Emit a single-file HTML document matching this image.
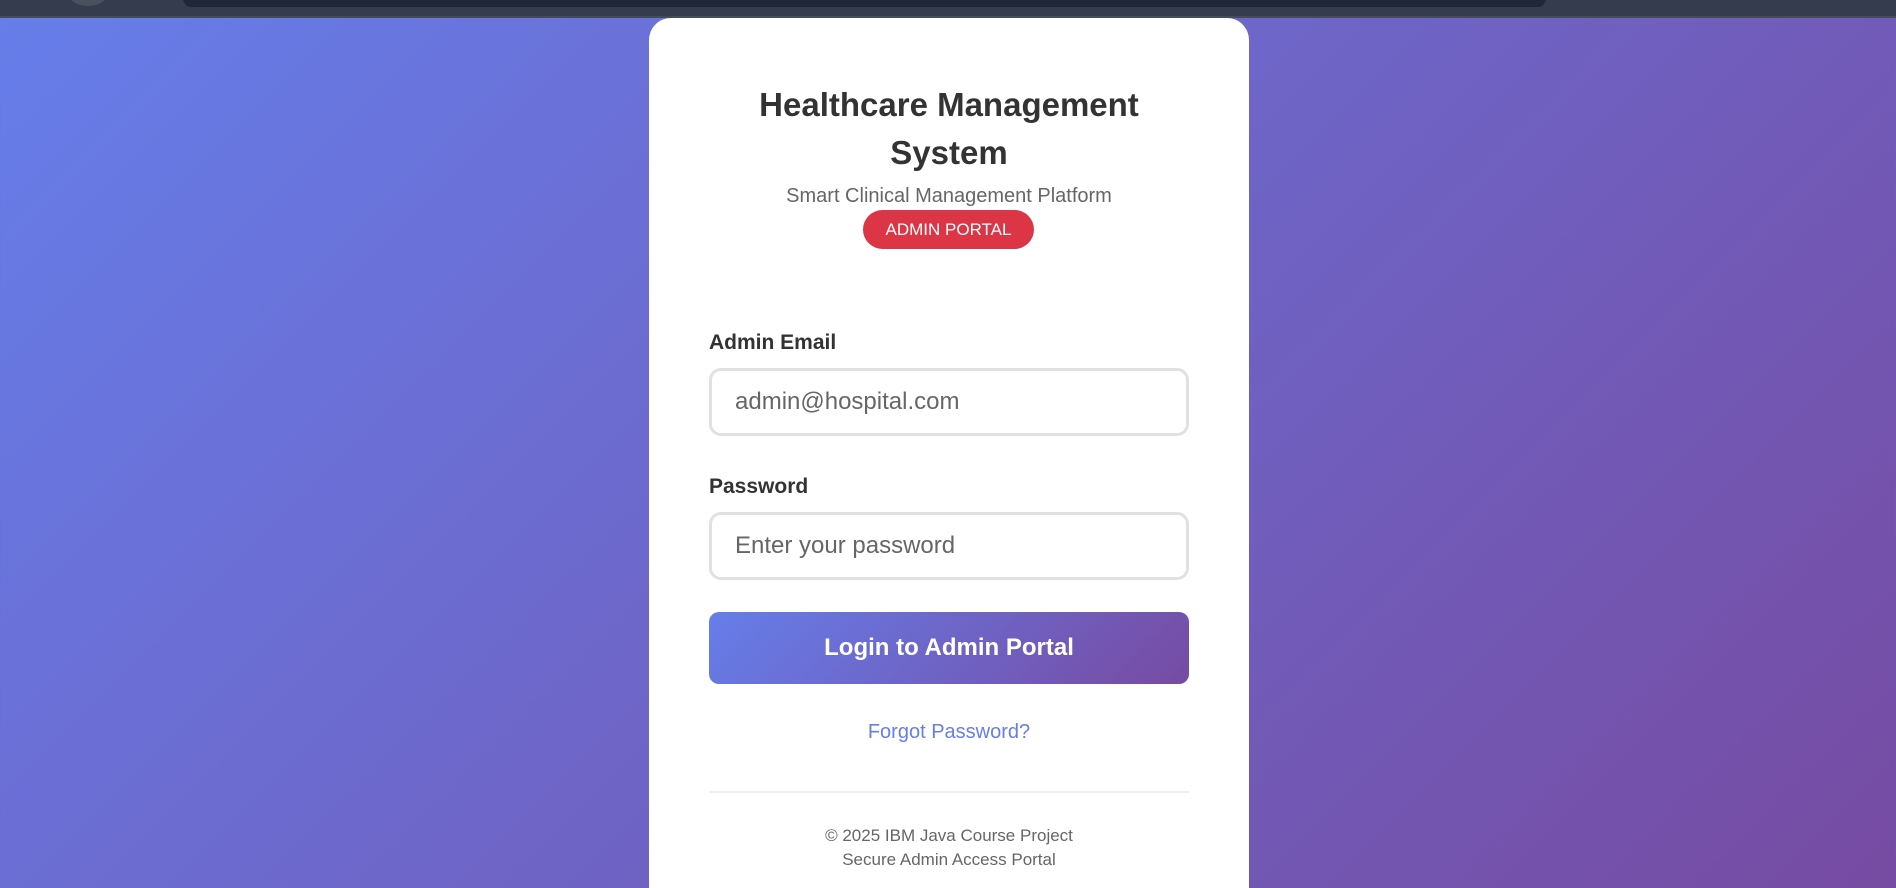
<!DOCTYPE html>
<html style="overflow:hidden;width:1896px;height:888px"><head><meta charset="utf-8"><style>
*{margin:0;padding:0;box-sizing:border-box}
body{width:1896px;height:888px;overflow:hidden;position:relative;font-family:"Liberation Sans",Arial,sans-serif;background:linear-gradient(135deg,#667eea 0%,#764ba2 100%)}
.top{position:absolute;left:0;top:0;width:1896px;height:18px;background:#353c4d;border-bottom:2px solid #444b5a}
.pill{position:absolute;left:183px;top:-10px;width:1363px;height:17px;background:#1f2638;border-radius:10px}
.circ{position:absolute;left:68px;top:-20px;width:40px;height:26px;border-radius:50%;background:#4a505e}
.card{position:absolute;left:649px;top:18px;width:600px;height:890px;background:#fff;border-radius:22px}
.c{position:absolute;left:0;width:600px;text-align:center}
h1{font-size:33px;font-weight:600;color:#333;line-height:48px}
.sub{font-size:20px;color:#666}
.badge{position:absolute;left:214px;top:192px;width:171px;height:39px;background:#dc3545;color:#fff;border-radius:20px;font-size:17px;text-align:center;line-height:39px}
.lbl{position:absolute;left:60px;font-size:21px;font-weight:bold;color:#333}
.inp{position:absolute;left:60px;width:480px;height:68px;border:3px solid #e1e1e1;border-radius:12px;font-size:24px;color:#666;padding-left:23px;line-height:62px}
.btn{position:absolute;left:60px;top:594px;width:480px;height:72px;border-radius:10px;background:linear-gradient(135deg,#667eea,#764ba2);color:#fff;font-weight:bold;font-size:24px;text-align:center;line-height:72px}
.fg{font-size:20px;color:#667eea}
.hr{position:absolute;left:60px;top:773px;width:480px;height:2px;background:#eee}
.ft{font-size:17px;color:#666;line-height:24px}
</style></head><body>
<div class="top"><div class="circ"></div><div class="pill"></div></div>
<div class="card">
<h1 class="c" style="top:63px">Healthcare Management<br>System</h1>
<div class="c sub" style="top:167px">Smart Clinical Management Platform</div>
<div class="badge">ADMIN PORTAL</div>
<div class="lbl" style="top:313px">Admin Email</div>
<div class="inp" style="top:350px">admin@hospital.com</div>
<div class="lbl" style="top:457px">Password</div>
<div class="inp" style="top:494px">Enter your password</div>
<div class="btn">Login to Admin Portal</div>
<div class="c fg" style="top:703px">Forgot Password?</div>
<div class="hr"></div>
<div class="c ft" style="top:806px">© 2025 IBM Java Course Project<br>Secure Admin Access Portal</div>
</div>
</body></html>
